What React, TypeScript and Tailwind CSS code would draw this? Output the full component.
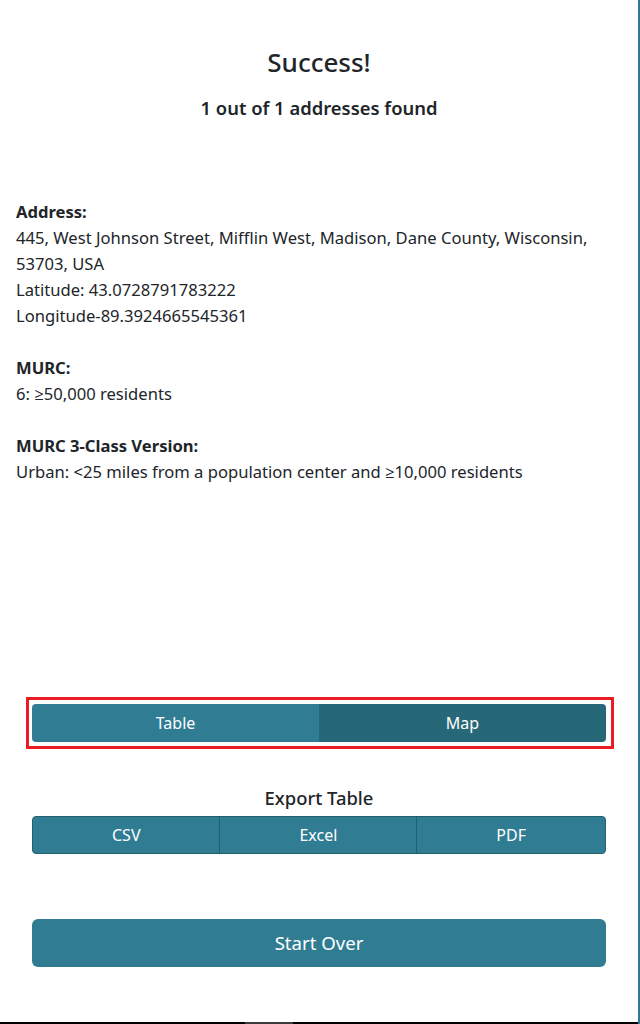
import React, { useState } from "react";

const font = { fontFamily: '"Noto Sans", "Open Sans", sans-serif' };

const App: React.FC = () => {
  const [view, setView] = useState<"table" | "map">("map");

  return (
    <div
      className="relative w-[640px] h-[1024px] bg-white text-[#212529] border-r-2 border-[#2e7b91] overflow-hidden"
      style={font}
    >
      <div className="flex flex-col items-center pt-[42px]">
        <h1 className="text-[26px] leading-[40px] font-medium">Success!</h1>
        <p className="mt-[13px] text-[18.4px] leading-[26px] font-semibold">
          1 out of 1 addresses found
        </p>
      </div>

      <div className="px-4 mt-[78px] text-[16.6px] leading-[26px]">
        <p className="font-bold">Address:</p>
        <p>445, West Johnson Street, Mifflin West, Madison, Dane County, Wisconsin, 53703, USA</p>
        <p>Latitude: 43.0728791783222</p>
        <p>Longitude-89.3924665545361</p>
        <p className="font-bold mt-[26px]">MURC:</p>
        <p>6: ≥50,000 residents</p>
        <p className="font-bold mt-[26px]">MURC 3-Class Version:</p>
        <p>Urban: &lt;25 miles from a population center and ≥10,000 residents</p>
      </div>

      <div className="ml-[26px] mr-[24px] mt-[212px] border-[3px] border-[#ec1c24] pl-[3px] pr-[5px] py-[4px]">
        <div className="flex h-[38px] rounded-[4px] overflow-hidden text-white text-[16px]">
          <button
            onClick={() => setView("table")}
            className={`flex-1 ${view === "table" ? "bg-[#276878]" : "bg-[#307d93]"}`}
          >
            Table
          </button>
          <button
            onClick={() => setView("map")}
            className={`flex-1 ${view === "map" ? "bg-[#276878]" : "bg-[#307d93]"}`}
          >
            Map
          </button>
        </div>
      </div>

      <div className="mx-8 mt-[37px] flex flex-col items-center">
        <h2 className="text-[18.4px] leading-[24px] font-medium">Export Table</h2>
        <div className="mt-[6px] w-full flex h-[38px] rounded-[4px] overflow-hidden border border-[#23606f] bg-[#307d93] text-white text-[16px]">
          <button className="flex-auto px-3">CSV</button>
          <button className="flex-auto px-3 border-l border-[#23606f]">Excel</button>
          <button className="flex-auto px-3 border-l border-[#23606f]">PDF</button>
        </div>
      </div>

      <div className="mx-8 mt-[65px]">
        <button className="w-full h-[48px] rounded-[6px] bg-[#307d93] text-white text-[18.6px]">
          Start Over
        </button>
      </div>

      <div className="absolute left-0 right-0 bottom-0 h-[2px] bg-black">
        <div className="ml-[245px] w-[48px] h-full bg-[#3b3b3b]" />
      </div>
    </div>
  );
};

export default App;
